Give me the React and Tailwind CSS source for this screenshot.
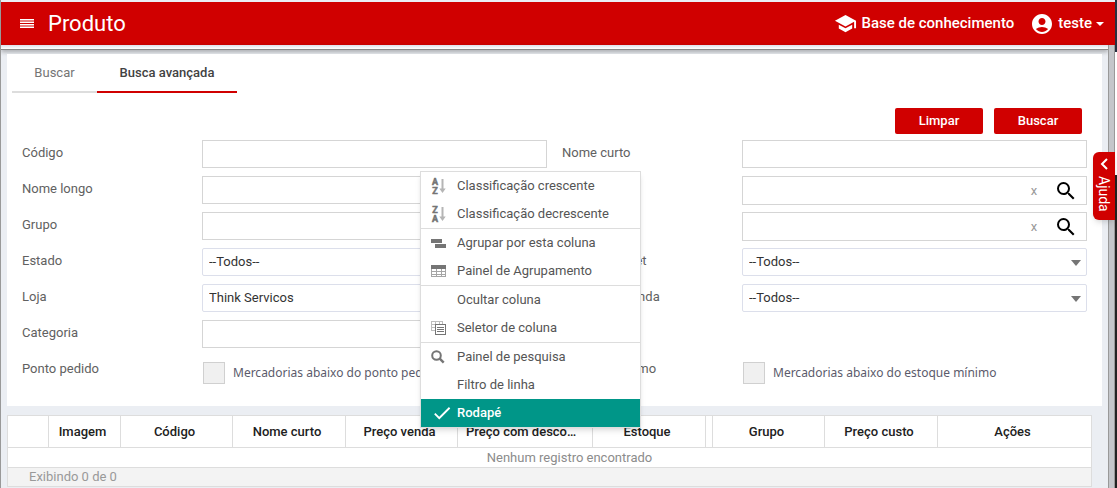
import React from 'react';
import { MdSchool, MdAccountCircle, MdSearch, MdCheck } from 'react-icons/md';

const INPUT = 'h-7 w-full border border-[#d5d5d5] bg-white px-1.5 text-[13px] text-[#333] outline-none';

const MenuIcon = () => (
  <svg width="14" height="9" viewBox="0 0 14 9" fill="currentColor">
    <path d="M0 0h14v1.400H0zM0 2.500h14v1.400H0zM0 5h14v1.400H0zM0 7.500h14v1.400H0z" />
  </svg>
);

const SortIcon = ({ top, bottom }) => (
  <svg
    width="16"
    height="16"
    viewBox="0 0 16 16"
    className="overflow-visible font-[Roboto,sans-serif] font-bold"
    fill="#757575"
    stroke="#757575"
    strokeWidth="0.5"
    fontSize="9"
  >
    <text x="4" y="7" textAnchor="middle">{top}</text>
    <text x="4" y="15.500" textAnchor="middle">{bottom}</text>
    <path d="M10.500 1h2v9.500h2.200L11.500 15l-3.200-4.500h2.200z" fill="#b5b5b5" stroke="none" />
  </svg>
);

const GroupIcon = () => (
  <svg width="16" height="16" viewBox="0 0 16 16" fill="#757575">
    <path d="M0 4h11v4H0zM4 9h11v4H4z" />
  </svg>
);

const PanelIcon = () => (
  <svg width="16" height="16" viewBox="0 0 16 16" shapeRendering="crispEdges">
    <path d="M0 2h15v4H0z" fill="#757575" />
    <path d="M0.500 6v7.500h14V6M5.500 6v7M10.500 6v7M0 8.500h15M0 11.500h15" fill="none" stroke="#a5a5a5" />
  </svg>
);

const ChooserIcon = () => (
  <svg width="16" height="16" viewBox="0 0 16 16" fill="none" shapeRendering="crispEdges">
    <path d="M0.500 1.500h11v9h-11zM0 4.500h12M0 7.500h12M4.500 1v9M8.500 1v3" stroke="#bdbdbd" />
    <path d="M4.500 4.500h10v10h-10z" fill="#fff" stroke="#757575" />
    <path d="M6 7.500h7M6 9.500h7M6 11.500h7" stroke="#757575" />
  </svg>
);

const FindIcon = () => (
  <svg width="16" height="16" viewBox="0 0 16 16" fill="none" stroke="#757575" strokeWidth="2">
    <circle cx="5.500" cy="6.500" r="4.300" />
    <path d="M8.700 9.700l4 4" strokeWidth="2.400" />
  </svg>
);

const menuGroups = [
  [
    { label: 'Classificação crescente', icon: <SortIcon top="A" bottom="Z" /> },
    { label: 'Classificação decrescente', icon: <SortIcon top="Z" bottom="A" /> },
  ],
  [
    { label: 'Agrupar por esta coluna', icon: <GroupIcon /> },
    { label: 'Painel de Agrupamento', icon: <PanelIcon /> },
  ],
  [
    { label: 'Ocultar coluna' },
    { label: 'Seletor de coluna', icon: <ChooserIcon /> },
  ],
  [
    { label: 'Painel de pesquisa', icon: <FindIcon /> },
    { label: 'Filtro de linha' },
    { label: 'Rodapé', icon: <MdCheck className="h-[22px] w-[22px]" />, active: true },
  ],
];

const columns = [
  { label: '', width: 41 },
  { label: 'Imagem', width: 72 },
  { label: 'Código', width: 112 },
  { label: 'Nome curto', width: 113 },
  { label: 'Preço venda', width: 112 },
  { label: 'Preço com desconto', width: 135 },
  { label: 'Estoque', width: 113 },
  { label: '', width: 7 },
  { label: 'Grupo', width: 112 },
  { label: 'Preço custo', width: 113 },
  { label: 'Ações', width: 154 },
];

const Field = ({ id, label, children }) => (
  <div className="flex h-9 items-start">
    <label htmlFor={id} className="w-[180px] shrink-0 text-[13px] leading-[26px] text-[#616161]">
      {label}
    </label>
    <div className="min-w-0 flex-1">{children}</div>
  </div>
);

const TextField = ({ id, label }) => (
  <Field id={id} label={label}>
    <input id={id} type="text" className={INPUT} />
  </Field>
);

const SearchField = ({ id, name }) => (
  <Field id={id}>
    <div className="flex h-[29px] items-center border border-[#d5d5d5]">
      <input id={id} type="text" aria-label={name} className="min-w-0 flex-1 px-1.5 text-[13px] outline-none" />
      <button type="button" aria-label="Apagar" className="w-6 text-[13px] text-[#999]">x</button>
      <button type="button" aria-label="Pesquisar" className="mx-2 text-black">
        <MdSearch className="h-6 w-6" />
      </button>
    </div>
  </Field>
);

const SelectField = ({ id, label, value }) => (
  <Field id={id} label={label}>
    <div className="relative">
      <select id={id} className="h-7 w-full appearance-none rounded-xs border border-[#dcdfeb] bg-white px-1.5 text-[13px] text-[#333] outline-none">
        <option>{value}</option>
      </select>
      <svg className="pointer-events-none absolute top-3 right-1.5" width="10" height="6" viewBox="0 0 10 6" fill="#757575">
        <path d="M0 0h10L5 6z" />
      </svg>
    </div>
  </Field>
);

const CheckField = ({ id, label, text }) => (
  <Field id={id} label={label}>
    <div className="flex items-center pt-1.5 pl-px">
      <input id={id} type="checkbox" className="h-[22px] w-[22px] appearance-none border border-[#d0d0d0] bg-[#f0f0f0]" />
      <label htmlFor={id} className="ml-2 font-['Noto_Sans',sans-serif] text-xs whitespace-nowrap text-[#5b5b6b]">
        {text}
      </label>
    </div>
  </Field>
);

const Header = () => (
  <header className="mt-0.5 flex h-[43px] items-center bg-[#d00000] text-white">
    <button type="button" aria-label="Menu" className="ml-[19px]">
      <MenuIcon />
    </button>
    <h1 className="ml-3.5 text-[22px] leading-none">Produto</h1>
    <nav className="mr-[11px] ml-auto flex items-center text-[15px] font-medium">
      <a href="#base" className="flex items-center gap-1">
        <MdSchool className="h-[23px] w-[23px]" />
        Base de conhecimento
      </a>
      <button type="button" className="ml-4 flex items-center gap-1">
        <MdAccountCircle className="h-6 w-6" />
        teste
        <svg width="8" height="4" viewBox="0 0 8 4" fill="currentColor"><path d="M0 0h8L4 4z" /></svg>
      </button>
    </nav>
  </header>
);

const SearchPanel = () => (
  <section className="relative bg-white pb-3.5">
    <div role="tablist" className="flex pl-[5px] text-[13px]">
      <button type="button" role="tab" aria-selected="false" className="h-[39px] w-[85px] border-b-2 border-[#ddd] text-[#757575]">
        Buscar
      </button>
      <button type="button" role="tab" aria-selected="true" className="h-[39px] w-[140px] border-b-2 border-[#d00000] font-medium text-[#424242]">
        Busca avançada
      </button>
    </div>
    <div className="mt-[15px] flex justify-end gap-[11px] pr-5 text-[13px] font-medium text-white">
      <button type="button" className="h-[26px] w-[88px] rounded-xs bg-[#d00000]">Limpar</button>
      <button type="button" className="h-[26px] w-[88px] rounded-xs bg-[#d00000]">Buscar</button>
    </div>
    <form className="mt-1.5 grid grid-cols-2 gap-x-[15px] px-[15px]">
      <TextField id="codigo" label="Código" />
      <TextField id="nome-curto" label="Nome curto" />
      <TextField id="nome-longo" label="Nome longo" />
      <SearchField id="marca" name="Marca" />
      <TextField id="grupo" label="Grupo" />
      <SearchField id="fornecedor" name="Fornecedor" />
      <SelectField id="estado" label="Estado" value="--Todos--" />
      <SelectField id="internet" label="Status internet" value="--Todos--" />
      <SelectField id="loja" label="Loja" value="Think Servicos" />
      <SelectField id="venda" label="Disponível venda" value="--Todos--" />
      <TextField id="categoria" label="Categoria" />
      <div />
      <CheckField id="ponto-pedido" label="Ponto pedido" text="Mercadorias abaixo do ponto pedido" />
      <CheckField id="estoque-minimo" label="Estoque mínimo" text="Mercadorias abaixo do estoque mínimo" />
    </form>
  </section>
);

const ResultsTable = () => (
  <table className="w-full table-fixed border-collapse border border-[#ddd] bg-white text-[13px]">
    <colgroup>
      {columns.map((column, i) => (
        <col key={i} style={{ width: column.width }} />
      ))}
    </colgroup>
    <thead>
      <tr className="h-8">
        {columns.map((column, i) => (
          <th key={i} className="truncate border border-[#ddd] pr-3 pl-2 font-medium text-[#212121]">
            {column.label}
          </th>
        ))}
      </tr>
    </thead>
    <tbody>
      <tr className="h-5">
        <td colSpan={columns.length} className="pl-10 text-center leading-[19px] text-[#8c8c8c]">
          Nenhum registro encontrado
        </td>
      </tr>
    </tbody>
    <tfoot>
      <tr className="h-[19px] border border-[#ddd] bg-[#f3f3f3]">
        <td colSpan={columns.length} className="pl-[21px] leading-[18px] text-[#999]">
          Exibindo 0 de 0
        </td>
      </tr>
    </tfoot>
  </table>
);

const ContextMenu = () => (
  <div role="menu" className="absolute top-[171px] left-[419px] w-[221px] divide-y divide-[#ddd] border border-[#ddd] bg-white text-[13px] text-[#555] shadow-md">
    {menuGroups.map((group, i) => (
      <div key={i}>
        {group.map((item) => (
          <button
            key={item.label}
            type="button"
            role="menuitem"
            className={`flex h-7 w-full items-center pl-2.5 ${
              item.active ? 'bg-[#009688] font-medium text-white' : ''
            }`}
          >
            <span className="flex w-[26px] shrink-0">{item.icon}</span>
            {item.label}
          </button>
        ))}
      </div>
    ))}
  </div>
);

const HelpTab = () => (
  <button
    type="button"
    className="absolute top-[152px] right-0.5 flex h-[68px] w-[22px] flex-col items-center gap-1.5 rounded-l-md bg-[#d00000] pt-1.5 text-sm text-white shadow-md"
  >
    <svg width="8" height="12" viewBox="0 0 8 12" fill="none" stroke="currentColor" strokeWidth="2"><path d="M7 1L2 6l5 5" /></svg>
    <span className="leading-none [writing-mode:vertical-rl]">Ajuda</span>
  </button>
);

export default function App() {
  return (
    <div className="relative flex min-h-screen overflow-hidden border-l border-[#999] bg-[#ebeef3] font-[Roboto,sans-serif]">
      <div className="flex min-w-0 flex-1 flex-col">
        <Header />
        <div className="flex flex-1">
          <div className="min-w-0 flex-1">
            <div className="h-[5px] border-b border-[#888] bg-linear-to-b from-[#dde0ea] to-white shadow-[0_2px_4px_rgba(0,0,0,0.3)]" />
            <main className="px-1.5 pt-1">
              <SearchPanel />
              <div className="mt-[9px] pr-2.5">
                <ResultsTable />
              </div>
            </main>
          </div>
          <div className="w-[7px] border-x border-[#999] bg-[#c4c6ca]" />
        </div>
      </div>
      <div className="flex w-0.5 flex-col">
        <div className="h-[52px] bg-[#263040]" />
        <div className="h-[123px] bg-white" />
        <div className="flex-1 bg-[#222]" />
      </div>
      <ContextMenu />
      <HelpTab />
    </div>
  );
}
